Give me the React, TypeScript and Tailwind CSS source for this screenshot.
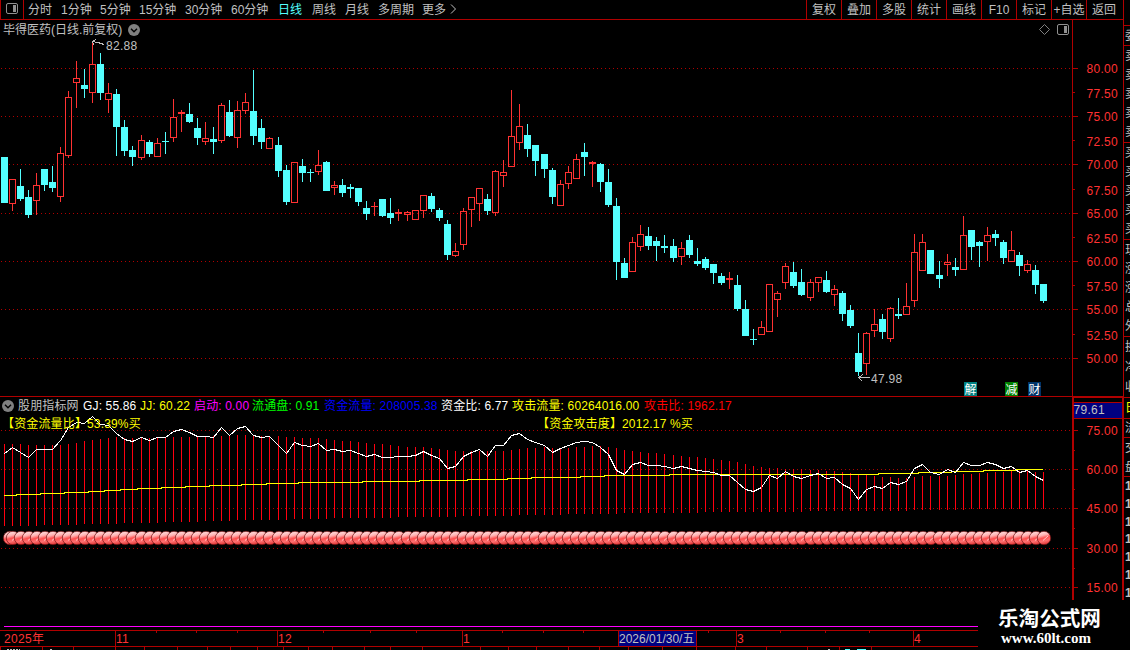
import React from 'react';

type Candle = [up: 0 | 1, high: number, top: number, bottom: number, low: number];

const FONT = "font-['Liberation_Sans','Noto_Sans_CJK_SC',sans-serif]";
const RED = '#ff3232';
const LINE = '#b00000';
const CYAN = '#54ffff';

// up/down, wick top, body top, body bottom, wick bottom
const candles: Candle[] = [
  [0, 157, 157, 203, 203], [1, 179, 179, 204, 211], [0, 169, 186, 199, 201], [0, 190, 197, 215, 218],
  [1, 173, 185, 201, 215], [0, 169, 169, 185, 191], [0, 166, 182, 188, 192], [1, 147, 153, 197, 202],
  [1, 91, 97, 156, 158], [1, 61, 78, 83, 108], [0, 69, 85, 89, 98], [1, 43, 64, 93, 103],
  [0, 53, 64, 93, 100], [1, 83, 93, 100, 113], [0, 89, 94, 127, 156], [0, 120, 127, 151, 156],
  [0, 146, 150, 157, 166], [1, 135, 140, 158, 160], [0, 140, 142, 154, 157], [1, 138, 143, 157, 157],
  [0, 132, 141, 142, 154], [1, 99, 117, 138, 142], [1, 110, 112, 114, 132], [0, 103, 114, 122, 123],
  [0, 118, 128, 138, 145], [1, 122, 138, 142, 145], [0, 127, 139, 142, 154], [1, 103, 105, 141, 143],
  [0, 100, 112, 136, 137], [1, 101, 110, 138, 148], [1, 93, 102, 111, 114], [0, 70, 111, 136, 145],
  [0, 119, 128, 142, 149], [1, 137, 138, 149, 149], [0, 137, 145, 171, 177], [0, 165, 170, 202, 205],
  [1, 162, 162, 203, 203], [0, 159, 166, 173, 182], [0, 169, 172, 173, 182], [1, 150, 165, 172, 175],
  [0, 161, 162, 191, 191], [1, 181, 185, 188, 195], [0, 179, 185, 193, 197], [0, 184, 187, 189, 198],
  [0, 188, 188, 202, 206], [0, 201, 208, 214, 220], [1, 202, 206, 207, 216], [0, 199, 199, 216, 217],
  [0, 198, 213, 218, 224], [1, 209, 212, 214, 221], [1, 211, 212, 215, 221], [1, 210, 210, 220, 220],
  [1, 195, 195, 211, 218], [0, 193, 196, 209, 212], [0, 208, 210, 218, 221], [0, 220, 224, 255, 260],
  [1, 243, 251, 256, 257], [1, 208, 211, 245, 250], [1, 197, 197, 210, 227], [1, 188, 188, 204, 221],
  [0, 194, 199, 211, 215], [1, 170, 171, 213, 216], [1, 160, 172, 176, 187], [1, 90, 136, 167, 167],
  [1, 104, 126, 143, 150], [0, 124, 135, 149, 157], [0, 145, 145, 161, 176], [0, 154, 154, 169, 178],
  [0, 168, 170, 197, 204], [1, 180, 184, 206, 206], [1, 166, 172, 184, 189], [1, 154, 159, 179, 179],
  [0, 143, 152, 157, 176], [1, 161, 162, 164, 187], [0, 163, 164, 182, 192], [0, 169, 182, 205, 207],
  [0, 198, 206, 262, 280], [0, 258, 263, 278, 278], [1, 237, 242, 272, 272], [1, 225, 234, 247, 251],
  [0, 227, 236, 246, 250], [0, 237, 241, 246, 261], [0, 235, 246, 248, 253], [0, 239, 246, 258, 262],
  [1, 242, 248, 257, 265], [0, 235, 240, 255, 258], [0, 248, 261, 264, 266], [0, 257, 259, 268, 270],
  [0, 264, 264, 273, 284], [0, 273, 276, 283, 285], [1, 272, 278, 280, 289], [0, 275, 285, 309, 311],
  [0, 300, 309, 336, 336], [0, 329, 339, 340, 345], [1, 321, 327, 335, 335], [1, 284, 284, 332, 332],
  [1, 291, 293, 300, 317], [1, 263, 266, 283, 289], [0, 262, 272, 286, 288], [0, 269, 282, 295, 296],
  [1, 279, 282, 298, 301], [1, 277, 277, 283, 292], [0, 271, 280, 292, 293], [1, 285, 289, 295, 306],
  [0, 291, 293, 314, 321], [0, 305, 310, 326, 328], [0, 333, 353, 372, 376], [1, 332, 333, 364, 375],
  [1, 309, 324, 331, 337], [0, 314, 319, 332, 339], [1, 307, 308, 339, 342], [0, 298, 314, 316, 319],
  [1, 283, 306, 315, 315], [1, 234, 252, 301, 307], [1, 234, 242, 271, 271], [0, 250, 250, 274, 274],
  [0, 261, 275, 279, 288], [1, 254, 262, 265, 276], [0, 258, 267, 270, 276], [1, 216, 235, 270, 270],
  [0, 230, 230, 247, 260], [0, 241, 242, 246, 267], [1, 227, 235, 242, 261], [0, 230, 234, 238, 246],
  [0, 240, 242, 258, 264], [1, 231, 250, 262, 262], [0, 252, 255, 266, 276], [1, 260, 264, 271, 273],
  [0, 265, 270, 285, 294], [0, 284, 284, 301, 303],
];

const barTops = [
  444, 444, 444, 445, 445, 445, 445, 445, 444, 443, 441, 440, 439, 438, 437, 438, 438, 438, 438, 438,
  437, 437, 437, 437, 437, 437, 436, 436, 435, 435, 435, 435, 436, 436, 436, 437, 437, 438, 438, 438,
  439, 440, 441, 441, 442, 443, 444, 444, 445, 446, 447, 447, 447, 448, 449, 450, 451, 451, 451, 451,
  451, 451, 451, 450, 449, 448, 448, 447, 448, 448, 448, 447, 447, 446, 446, 447, 448, 450, 451, 452,
  453, 453, 454, 455, 456, 457, 457, 458, 459, 460, 461, 462, 464, 466, 467, 468, 468, 469, 469, 469,
  470, 470, 471, 471, 472, 473, 474, 475, 476, 477, 477, 478, 478, 477, 476, 476, 476, 476, 475, 474,
  474, 473, 473, 472, 472, 471, 471, 471, 472, 472,
];

// [first bar index, bottom y]
const barBottoms = [
  [0, 526], [5, 525], [10, 524], [15, 523], [20, 522], [25, 521], [29, 520], [36, 519], [41, 518],
  [49, 517], [57, 516], [64, 515], [70, 514], [77, 513], [87, 512], [100, 511], [113, 510], [120, 509],
];

const gj = [
  453, 447, 452, 457, 449, 449, 449, 440, 427, 422, 423, 416, 424, 425, 433, 439, 441, 437, 440, 437,
  437, 431, 429, 432, 436, 436, 437, 427, 435, 428, 426, 435, 437, 436, 445, 453, 442, 445, 446, 443,
  450, 449, 451, 450, 453, 456, 454, 457, 457, 456, 456, 455, 451, 455, 458, 468, 466, 456, 452, 449,
  456, 445, 445, 435, 433, 439, 442, 445, 452, 448, 445, 442, 441, 442, 447, 454, 470, 474, 464, 462,
  465, 465, 466, 468, 466, 468, 470, 471, 472, 475, 475, 482, 489, 491, 487, 475, 478, 471, 476, 478,
  475, 473, 478, 477, 484, 488, 499, 489, 486, 488, 482, 484, 481, 468, 464, 472, 474, 469, 472, 462,
  465, 465, 462, 464, 468, 466, 472, 470, 476, 480,
];

// [x where the step starts, y]
const jj = [
  [4, 495], [16, 494], [40, 493], [64, 492], [88, 491], [104, 490], [120, 489], [137, 488], [161, 487],
  [185, 486], [209, 485], [241, 484], [266, 483], [298, 482], [362, 481], [419, 480], [467, 479],
  [507, 478], [531, 477], [580, 476], [604, 475], [669, 474], [878, 473], [918, 472], [951, 471],
  [983, 470], [1015, 469], [1043, 469],
];

const xAt = (i: number) => Math.floor(4 + i * 8.0605);
const bottomAt = (i: number) => barBottoms.filter(([from]) => from <= i).slice(-1)[0][1];

const periods = [
  { label: '分时', width: 'w-[33px]' },
  { label: '1分钟', width: 'w-[39px]' },
  { label: '5分钟', width: 'w-[39px]' },
  { label: '15分钟', width: 'w-[46px]' },
  { label: '30分钟', width: 'w-[46px]' },
  { label: '60分钟', width: 'w-[47px]' },
  { label: '日线', width: 'w-[34px]', active: true },
  { label: '周线', width: 'w-[33px]' },
  { label: '月线', width: 'w-[33px]' },
  { label: '多周期', width: 'w-[44px]' },
  { label: '更多', width: 'w-[28px]' },
];

const tools = ['复权', '叠加', '多股', '统计', '画线', 'F10', '标记', '+自选', '返回'];

const readouts = [
  { text: '股朋指标网', style: 'w-[65px] text-[#c0c0c0]' },
  { text: 'GJ: 55.86', style: 'w-[57px] text-white' },
  { text: 'JJ: 60.22', style: 'w-[54px] text-[#ffff00]' },
  { text: '启动: 0.00', style: 'w-[58px] text-[#ff00ff]' },
  { text: '流通盘: 0.91', style: 'w-[72px] text-[#00ff00]' },
  { text: '资金流量: 208005.38', style: 'w-[117px] text-[#0000ff]' },
  { text: '资金比: 6.77', style: 'w-[71px] text-white' },
  { text: '攻击流量: 60264016.00', style: 'w-[132px] text-[#ffff00]' },
  { text: '攻击比: 1962.17', style: 'w-[90px] text-[#ff0000]' },
];

const badges = [
  { text: '解', x: 964, fill: '#008080' },
  { text: '减', x: 1005, fill: '#008000' },
  { text: '财', x: 1028, fill: '#003468' },
];

const quoteRows = [
  { h: 'h-[20px]', rows: ['委'] },
  { h: 'h-[97px]', rows: ['卖', '卖', '卖', '卖', '卖'] },
  { h: 'h-[97px]', rows: ['买', '买', '买', '买', '买'] },
  { h: 'h-[97px]', rows: ['现', '涨', '涨', '总', '外'] },
  { h: 'h-[61px]', rows: ['换', '净', '收'] },
  { h: 'h-[21px] text-[#ffff00]', rows: ['日'] },
  { h: 'h-[19px]', rows: ['流'] },
  { h: 'h-[39px]', rows: ['交', '盘'] },
  { h: 'h-[126px] font-bold', rows: ['1', '1', '1', '1', '1', '1', '1'] },
];

function PanelIcon() {
  return (
    <svg width="12" height="11" viewBox="0 0 12 11">
      <rect x="0.5" y="0.5" width="11" height="10" rx="1.5" fill="none" stroke="#909090" />
      <rect x="7" y="2" width="3" height="7" fill="#909090" />
    </svg>
  );
}

function DropIcon() {
  return (
    <svg width="12" height="12" viewBox="0 0 12 12">
      <circle cx="6" cy="6" r="6" fill="#808080" />
      <path d="M3 4.7 6 7.7 9 4.7" fill="none" stroke="#000" strokeWidth="1.4" />
    </svg>
  );
}

function Toolbar() {
  return (
    <header className="flex h-[20px] items-stretch border-b border-[#b00000] text-[#c0c0c0]">
      <div className="flex w-[24px] justify-center border-x border-[#b00000] pt-[3px]">
        <PanelIcon />
      </div>
      <nav className="flex flex-1 pl-[4px] leading-[20px]">
        {periods.map(p => (
          <span key={p.label} className={`${p.width} ${p.active ? 'text-[#54ffff]' : ''}`}>
            {p.label}
          </span>
        ))}
        <svg width="7" height="19" viewBox="0 0 7 19">
          <path d="M1 4.5 5.5 9 1 13.5" fill="none" stroke="#c0c0c0" />
        </svg>
      </nav>
      <div className="flex pr-[2px] leading-[20px] whitespace-nowrap">
        {tools.map(tool => (
          <span key={tool} className="flex w-[35px] justify-center border-l border-[#b00000]">
            {tool}
          </span>
        ))}
      </div>
    </header>
  );
}

function GridLine({ y }: { y: number }) {
  return <line x1="1" x2="1072" y1={y + 0.5} y2={y + 0.5} stroke={LINE} strokeDasharray="1 3" />;
}

function Scale({ major, minor, start }: { major: number[]; minor: number[]; start: number }) {
  const step = start === 80 ? 5 : 15;
  return (
    <g>
      {major.map((y, i) => (
        <g key={y}>
          <rect x="1073" y={y} width="5" height="1" fill={LINE} />
          <text x="1118" y={y + 5} textAnchor="end" fill={RED}>
            {(start - i * step).toFixed(2)}
          </text>
        </g>
      ))}
      {minor.map((y, i) => (
        <g key={y}>
          <rect x="1073" y={y} width="2" height="1" fill={LINE} />
          {start === 80 && (
            <text x="1118" y={y + 6} textAnchor="end" fill={RED}>
              {(77.5 - i * step).toFixed(2)}
            </text>
          )}
        </g>
      ))}
    </g>
  );
}

function PriceChart() {
  const major = [68, 116, 164, 213, 261, 309, 358];
  const minor = [92, 140, 189, 237, 285, 334];
  return (
    <section className="relative h-[377px]">
      <svg className="block text-[12px] tracking-[0.3px]" width="1123" height="377" viewBox="0 20 1123 377" shapeRendering="crispEdges">
        {major.map(y => <GridLine key={y} y={y} />)}
        {candles.map(([up, high, top, bottom, low], i) => {
          const x = xAt(i);
          const color = up ? RED : CYAN;
          return (
            <g key={i} fill={color}>
              <rect x={x} y={high} width="1" height={top - high} />
              <rect x={x} y={bottom} width="1" height={low - bottom} />
              {up && bottom - top > 2 ? (
                <rect x={x - 2.5} y={top + 0.5} width="6" height={bottom - top - 1} fill="none" stroke={color} />
              ) : (
                <rect x={x - 3} y={top} width="7" height={bottom - top} />
              )}
            </g>
          );
        })}
        <g stroke="#c0c0c0" fill="none">
          <path d="M92.5 41.5 98 42.5 104 44.5M96 39.5 92.5 41.5 94 45" />
          <path d="M859 377.5H870M863 374 859 377.5 862 381" />
        </g>
        <text x="106" y="50" fill="#c0c0c0">82.88</text>
        <text x="871" y="383" fill="#c0c0c0">47.98</text>
        {badges.map(b => (
          <g key={b.text}>
            <rect x={b.x} y="382" width="13" height="14" fill={b.fill} />
            <text x={b.x + 0.5} y="393.5" fill="#fff">{b.text}</text>
          </g>
        ))}
        <rect x="1072" y="20" width="1" height="377" fill={LINE} />
        <rect x="0" y="396" width="1123" height="1" fill={LINE} />
        <Scale major={major} minor={minor} start={80} />
      </svg>
      <div className="absolute inset-x-0 top-0 flex h-[19px] items-center pr-[54px] pl-[3px] text-[#c0c0c0]">
        <span className="w-[125px]">毕得医药(日线.前复权)</span>
        <DropIcon />
        <div className="ml-auto flex items-center gap-[7px]">
          <svg width="11" height="11" viewBox="0 0 11 11">
            <path d="M5.5.5 10.5 5.5 5.5 10.5.5 5.5Z" fill="none" stroke="#808080" />
          </svg>
          <PanelIcon />
        </div>
      </div>
    </section>
  );
}

function IndicatorChart() {
  const major = [430, 469, 508, 548, 587];
  const minor = [450, 489, 528, 568];
  const jjPath = jj.map(([x, y], i) => (i ? `H${x}V${y + 0.5}` : `M${x} ${y + 0.5}`)).join('');
  return (
    <section className="relative h-[233px]">
      <svg className="block text-[12px] tracking-[0.3px]" width="1123" height="233" viewBox="0 397 1123 233" shapeRendering="crispEdges">
        <defs>
          <linearGradient id="ball" x1="0.35" y1="0" x2="0.6" y2="1">
            <stop offset="0" stopColor="#ffe4e4" />
            <stop offset="0.3" stopColor="#ffb0b0" />
            <stop offset="0.5" stopColor="#ff5050" />
            <stop offset="0.72" stopColor="#ff7070" />
            <stop offset="1" stopColor="#e03030" />
          </linearGradient>
        </defs>
        {major.map(y => <GridLine key={y} y={y} />)}
        {barTops.map((top, i) => (
          <rect key={i} x={xAt(i)} y={top} width="1" height={bottomAt(i) - top} fill="#ff0010" />
        ))}
        <path d={jjPath} fill="none" stroke="#ffff00" />
        <polyline points={gj.map((y, i) => `${xAt(i) + 0.5},${y + 0.5}`).join(' ')} fill="none" stroke="#fff" />
        <g shapeRendering="auto">
          {gj.map((_, i) => {
            const cx = Math.max(10, xAt(i) + 1);
            return (
              <g key={i}>
                <circle cx={cx} cy="538" r="6.7" fill="url(#ball)" stroke="#701010" strokeWidth="0.7" />
                <path d={`M${cx - 1} 540.5 ${cx + 4} 536`} stroke="#ffc8c8" strokeWidth="1" />
              </g>
            );
          })}
        </g>
        <rect x="4" y="626" width="974" height="1" fill="#ff00ff" />
        <rect x="1074" y="402" width="48" height="17" fill="#000080" />
        <rect x="1072" y="397" width="51" height="1" fill={LINE} />
        <rect x="1074" y="402" width="48" height="1" fill={LINE} />
        <rect x="1074" y="418" width="48" height="1" fill={LINE} />
        <rect x="1072" y="397" width="2" height="203" fill={LINE} />
        <rect x="1122" y="397" width="1" height="203" fill={LINE} />
        <text x="1073.5" y="414" fill="#c0c0c0">79.61</text>
        <Scale major={major} minor={minor} start={75} />
      </svg>
      <div className="absolute top-0 left-0 flex h-[17px] items-center gap-[4px] pl-[2px] tracking-[0.15px] whitespace-nowrap">
        <DropIcon />
        <div className="flex">
          {readouts.map(r => (
            <span key={r.text} className={r.style}>{r.text}</span>
          ))}
        </div>
      </div>
      <div className="absolute top-[18px] left-[2px] flex leading-[18px] whitespace-nowrap text-[#ffff00]">
        <span className="w-[535px] tracking-[0.15px]">【资金流量比】53.39%买</span>
        <span className="tracking-[0.15px]">【资金攻击度】2012.17 %买</span>
      </div>
    </section>
  );
}

function TimeAxis() {
  const months: [number, string][] = [[115, '11'], [277, '12'], [462, '1'], [736, '3'], [913, '4']];
  const ticks = [156, 196, 237, 323, 370, 416, 502, 543, 583, 708, 780, 825, 869];
  const cuts = [
    0, 42, 73, 115, 144, 177, 207, 230, 257, 283, 308, 332, 364, 390, 422, 480, 508, 536, 568, 599, 628,
    662, 696, 735, 766, 807, 839, 871,
  ];
  return (
    <svg className="block text-[12px] tracking-[0.3px]" width="978" height="20" viewBox="0 630 978 20" shapeRendering="crispEdges">
      <rect x="619" y="631" width="77" height="15" fill="#000080" />
      <g fill={LINE}>
        <rect x="0" y="630" width="978" height="1" />
        <rect x="0" y="646" width="978" height="1" />
        {[...months.map(m => m[0]), 618, 696].map(x => <rect key={x} x={x} y="630" width="1" height="17" />)}
        {ticks.map(x => <rect key={x} x={x} y="630" width="1" height="3" />)}
        {cuts.map(x => <rect key={x} x={x} y="647" width="1" height="3" />)}
      </g>
      <text x="4" y="643" fill={RED}>2025年</text>
      {months.map(([x, label]) => <text key={x} x={x + 1} y="643" fill={RED}>{label}</text>)}
      <text x="619" y="642.5" fill="#c0c0c0" letterSpacing="0">2026/01/30/五</text>
      <path d="M7 649.5H20M50 649.5H52M828 649.5H830" stroke="#c0c0c0" strokeDasharray="2 1" />
      <path d="M845 649.5H850M857 649.5H866" stroke={CYAN} />
    </svg>
  );
}

function QuoteStrip() {
  return (
    <aside className="flex h-[650px] w-[7px] flex-col overflow-hidden border-l border-[#b00000] pt-[25px] text-[#c0c0c0]">
      {quoteRows.map((group, i) => (
        <div key={i} className={`${group.h} flex shrink-0 flex-col justify-around overflow-hidden border-t border-[#b00000] pl-[1px]`}>
          {group.rows.map((row, j) => (
            <span key={j} className="w-[12px] leading-[14px]">{row}</span>
          ))}
        </div>
      ))}
    </aside>
  );
}

function App() {
  return (
    <div className={`relative flex h-[650px] w-[1130px] overflow-hidden bg-black text-[12px] ${FONT}`}>
      <main className="flex w-[1123px] flex-col">
        <Toolbar />
        <PriceChart />
        <IndicatorChart />
        <TimeAxis />
      </main>
      <QuoteStrip />

      {/* Site mark over the bottom right corner */}
      <div className="absolute right-0 bottom-0 h-[50px] w-[152px] bg-black pt-[8px] pl-[20px] text-white">
        <div className="text-[20.6px] leading-[22px] font-bold">乐淘公式网</div>
        <div className="pl-[3px] font-['Liberation_Serif',serif] text-[15px] leading-[17px] font-bold">www.60lt.com</div>
      </div>
    </div>
  );
}

export default App;
